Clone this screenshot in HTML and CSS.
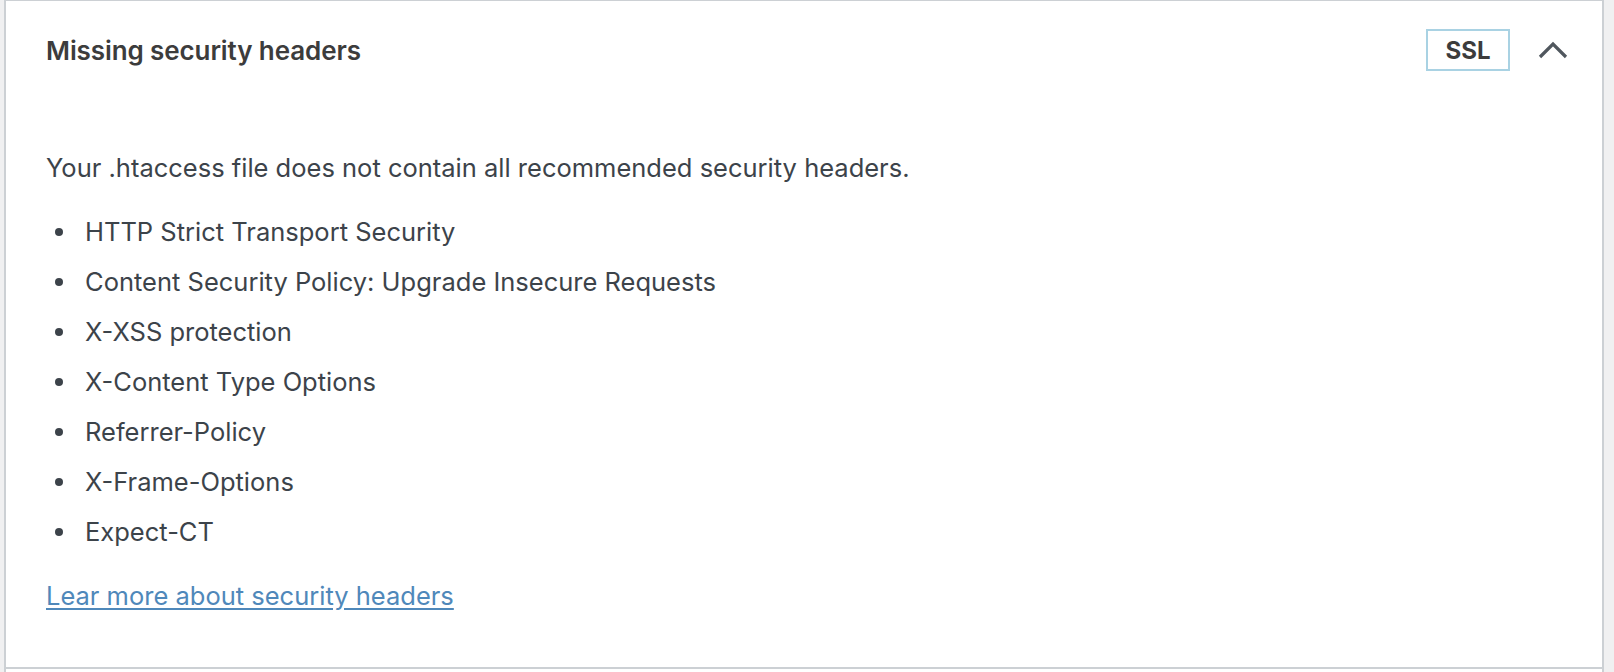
FILE: index.html
```html
<!DOCTYPE html>
<html lang="en">
<head>
<meta charset="utf-8">
<title>Missing security headers</title>
<link rel="stylesheet" href="styles.css">
</head>
<body>
<div class="card">
  <div class="card-header">
    <h2 class="card-title">Missing security headers</h2>
    <div class="card-actions">
      <span class="badge">SSL</span>
      <button class="toggle" aria-label="Collapse">
        <svg width="30" height="18" viewBox="0 0 30 18"><path d="M2 16 L15 3 L28 16" fill="none" stroke="#50575e" stroke-width="3.2"/></svg>
      </button>
    </div>
  </div>
  <div class="card-body">
    <p class="intro">Your .htaccess file does not contain all recommended security headers.</p>
    <ul class="header-list">
      <li>HTTP Strict Transport Security</li>
      <li>Content Security Policy: Upgrade Insecure Requests</li>
      <li>X-XSS protection</li>
      <li>X-Content Type Options</li>
      <li>Referrer-Policy</li>
      <li>X-Frame-Options</li>
      <li>Expect-CT</li>
    </ul>
    <p class="more-line"><a class="more" href="#">Lear more about security headers</a></p>
  </div>
</div>
<div class="card next"></div>
</body>
</html>
```

FILE: styles.css
```css
html, body {
  margin: 0;
  padding: 0;
  background: #f0f0f1;
}
body {
  font-family: Inter, "Noto Sans", sans-serif;
  color: #3c434a;
}
.card {
  margin-left: 4px;
  width: 1596px;
  background: #fff;
  border-top: 1px solid #ccd0d4;
  border-left: 2px solid #ccd0d4;
  border-right: 2px solid #ccd0d4;
  border-bottom: 2px solid #ccd0d4;
}
.card.next {
  height: 3px;
  border-bottom: none;
  border-top: none;
}
.card-header {
  display: flex;
  align-items: center;
  justify-content: space-between;
  height: 98px;
  padding: 0 34px 0 40px;
}
.card-title {
  margin: 0;
  font-size: 26px;
  font-weight: 600;
  color: #3c3c3c;
  letter-spacing: -0.1px;
}
.card-actions {
  display: flex;
  align-items: center;
  gap: 28px;
}
.badge {
  box-sizing: border-box;
  width: 84px;
  height: 42px;
  display: flex;
  align-items: center;
  justify-content: center;
  border: 2px solid #a9d2e3;
  font-size: 24px;
  font-weight: 700;
  color: #3c3c3c;
}
.toggle {
  border: 0;
  background: none;
  padding: 0;
  width: 30px;
  height: 18px;
  display: block;
}
.toggle svg { display: block; }
.card-body {
  padding: 54px 40px 56px;
  font-size: 25.5px;
}
.intro {
  margin: 0 0 34px;
  line-height: 30px;
}
.header-list {
  margin: 0;
  padding: 0;
  list-style: none;
}
.header-list li {
  display: flex;
  align-items: center;
  line-height: 30px;
  margin-bottom: 20px;
}
.header-list li:last-child {
  margin-bottom: 34px;
}
.header-list li::before {
  content: "";
  flex: none;
  width: 8px;
  height: 8px;
  border-radius: 50%;
  background: #3c434a;
  margin-left: 9px;
  margin-right: 22px;
}
.more-line {
  margin: 0;
  line-height: 30px;
}
.more {
  color: #4f88ba;
  text-decoration: underline;
  text-underline-offset: 3px;
}
```
